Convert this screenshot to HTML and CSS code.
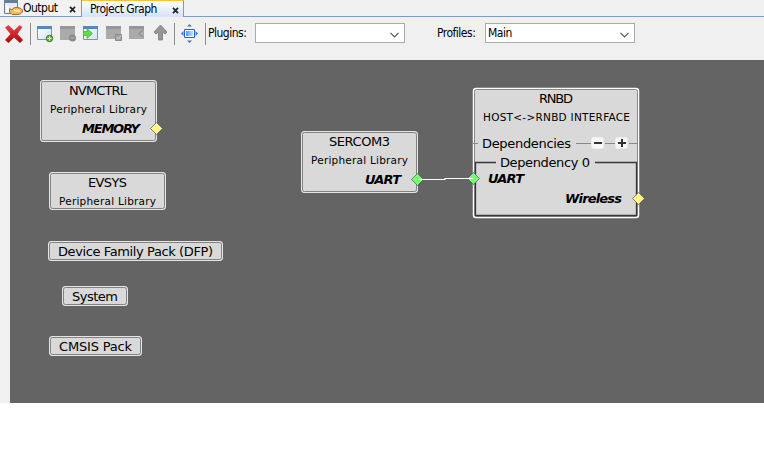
FILE: index.html
```html
<!DOCTYPE html>
<html lang="en">
<head>
<meta charset="utf-8">
<title>Project Graph</title>
<link rel="stylesheet" href="styles.css">
</head>
<body>
<main class="app">
  <nav class="tabs">
    <div class="tab tab-output">
      <svg class="tab-icon" width="20" height="16" viewBox="0 0 20 16"><path d="M.5 -1H13.500V13.500H.5Z" fill="#e4ebf2" stroke="#6d8297"/><path d="M0 0H14V3H0Z" fill="#657f9b"/><path d="M2 4L6 9L8 12H3Z" fill="#fff"/><path d="M5.500 8.500L8 10Q9 7 13 7.500Q18.500 8 18.500 11Q18 14.500 13 14.500H8L5.500 12Z" fill="#f3bd68" stroke="#a66a29"/><path d="M10 10.500L16 11" stroke="#fff0bd" stroke-width="1.500"/></svg>
      <span class="label">Output</span>
      <svg class="close" width="7" height="7" viewBox="0 0 7 7"><path d="M1 .8L6 6.2M6 .8L1 6.2"/></svg>
    </div>
    <div class="tab tab-active">
      <span class="label">Project Graph</span>
      <svg class="close" width="7" height="7" viewBox="0 0 7 7"><path d="M1 .8L6 6.2M6 .8L1 6.2"/></svg>
    </div>
  </nav>
  <div class="toolbar">
    <svg class="tools" width="206" height="34" viewBox="0 0 206 34">
      <defs><linearGradient id="red" x2="0" y2="1"><stop stop-color="#e8454a"/><stop offset="1" stop-color="#b30509"/></linearGradient><linearGradient id="blue"><stop stop-color="#4c9bff"/><stop offset="1" stop-color="#c0e5ff"/></linearGradient><linearGradient id="win" x2="1" y2="1"><stop stop-color="#fff"/><stop offset="1" stop-color="#cfe1f7"/></linearGradient></defs>
      <path d="M5 10.500L8.500 8L14 13.500L19.500 8L22.500 10L17.500 17L23 23L20 26L14 20.500L8.500 26L5 23L10.500 17Z" fill="url(#red)"/>
      <path d="M30.500 6V28M174.500 6V28M205.500 6V28" stroke="#8c8c8c"/>
      <g transform="translate(0 1)">
      <path d="M37.500 8.500H51.500V21.500H37.500Z" fill="url(#win)" stroke="#7298be"/><path d="M37 8H52V11H37Z" fill="#5687b8"/><circle cx="49.500" cy="20.500" r="3.200" fill="#72b34d" stroke="#3c7523"/><path d="M47.500 20.500H51.500M49.500 18.500V22.500" stroke="#fff"/>
      <path d="M60 8H75V22H60Z" fill="#aaa"/><path d="M60 8H75V11H60Z" fill="#979797"/><circle cx="72.500" cy="20" r="3.500" fill="#898989"/><path d="M70.500 20H74.500" stroke="#bbb"/>
      <path d="M83.500 8.500H97.500V21.500H83.500Z" fill="url(#win)" stroke="#7298be"/><path d="M83 8H98V11H83Z" fill="#5687b8"/><path d="M83.500 13.500H87V10.500L92.500 15.500L87 20.500V17.500H83.500Z" fill="#5fdd43" stroke="#42b52b" stroke-width=".7"/>
      <path d="M106 8H121V21H106Z" fill="#aaa"/><path d="M106 8H121V11H106Z" fill="#979797"/><path d="M115.500 16.500H121.500V22.500H115.500Z" fill="#a3a3a3" stroke="#8c8c8c"/><path d="M117 19L118.500 21L121 17.500" fill="none" stroke="#ccc"/>
      <path d="M129 8H144V21H129Z" fill="#aaa"/><path d="M129 8H144V11H129Z" fill="#979797"/><path d="M143.500 12L138.500 15.500L143.500 19" fill="none" stroke="#8a8a8a"/>
      <path d="M160.500 7L167 14L165 16L162.500 14V22H158.500V14L156 16L154 14Z" fill="#969696" stroke="#898989"/>
      <path d="M184.500 11.500H194.500V19.500H184.500Z" fill="#fff" stroke="#285fdb"/><path d="M186 13H193V18H186Z" fill="url(#blue)"/><path d="M189.500 6L192 8.500H187ZM189.500 25L192 22.500H187ZM181 15.500L183.500 13V18ZM198 15.500L195.500 13V18Z" fill="#3775dc"/>
      </g>
    </svg>
    <div class="plugins"><span class="label">Plugins:</span></div>
    <div class="select"><span class="label"></span><svg width="9" height="6" viewBox="0 0 9 6"><path d="M.5 .8L4.500 4.800L8.500 .8"/></svg></div>
    <div class="profiles"><span class="label">Profiles:</span></div>
    <div class="select"><span class="label">Main</span><svg width="9" height="6" viewBox="0 0 9 6"><path d="M.5 .8L4.500 4.800L8.500 .8"/></svg></div>
  </div>
  <section class="canvas">
    <svg class="graph" width="754" height="343" viewBox="10 60 754 343">
      <defs><g id="port"><path d="M0 -6L6 0L0 6L-6 0Z"/></g></defs>
      <g class="node">
        <rect x="40.500" y="80.500" width="116" height="61" rx="2.500"/><rect x="49.500" y="172.500" width="116" height="37" rx="2.500"/><rect x="48.500" y="241.500" width="174" height="19" rx="2.500"/><rect x="62.500" y="286.500" width="65" height="19" rx="2.500"/><rect x="49.500" y="336.500" width="92" height="19" rx="2.500"/><rect x="301.500" y="131.500" width="116" height="61" rx="2.500"/>
      </g>
      <g class="inner"><rect x="41.500" y="81.500" width="114" height="59" rx="2"/><rect x="50.500" y="173.500" width="114" height="35" rx="2"/><rect x="49.500" y="242.500" width="172" height="17" rx="2"/><rect x="63.500" y="287.500" width="63" height="17" rx="2"/><rect x="50.500" y="337.500" width="90" height="17" rx="2"/><rect x="302.500" y="132.500" width="114" height="59" rx="2"/></g>
      <rect class="selected" x="473.500" y="88.500" width="165" height="129" rx="2.500"/>
      <rect class="selected-inner" x="474.500" y="89.500" width="163" height="127" rx="2"/>
      <path d="M473 143.500H478M576 143.500H591M605 143.500H615M629 143.500H638" stroke="#888"/>
      <path d="M496 162.500H475.500V215.500H636.500V162.500H595" class="dependency"/>
      <g class="buttons"><rect x="591.500" y="137.500" width="12" height="11" rx="2"/><rect x="615.500" y="137.500" width="12" height="11" rx="2"/><path d="M594 143H602M618 143H626M622 139V147"/></g>
      <g class="green"><use href="#port" x="417.500" y="179.500"/><use href="#port" x="473.500" y="178.500"/></g>
      <path d="M418 179.500H445V178.500H473" fill="none" stroke="#fff" stroke-width="1.200"/>
      <g class="yellow"><use href="#port" x="156.500" y="128.500"/><use href="#port" x="638.500" y="198.500"/></g>
      <g class="heading">
        <text x="69" y="95" textLength="58">NVMCTRL</text><text x="88" y="187" textLength="39">EVSYS</text><text x="58" y="256" textLength="155">Device Family Pack (DFP)</text><text x="72" y="301" textLength="46">System</text><text x="59" y="351" textLength="73">CMSIS Pack</text><text x="329" y="146" textLength="61">SERCOM3</text><text x="539" y="103" textLength="34">RNBD</text><text x="482" y="148" textLength="89">Dependencies</text><text x="500" y="167" textLength="90">Dependency 0</text>
      </g>
      <g class="small"><text x="50" y="113" textLength="97">Peripheral Library</text><text x="59" y="205" textLength="97">Peripheral Library</text><text x="311" y="164" textLength="97">Peripheral Library</text><text x="483" y="121" textLength="147">HOST&lt;-&gt;RNBD INTERFACE</text></g>
      <g class="signal"><text x="82" y="133" textLength="58">MEMORY</text><text x="365" y="184" textLength="36">UART</text><text x="488" y="183" textLength="36">UART</text><text x="565" y="203" textLength="57">Wireless</text></g>
    </svg>
  </section>
</main>
</body>
</html>
```
FILE: styles.css
```css
*{box-sizing:border-box}
body{margin:0;background:#fff;font-family:"DejaVu Sans Condensed","DejaVu Sans",sans-serif;font-size:12px;letter-spacing:-.5px;color:#000}
.app{width:764px;height:403px;background:#f0f0f0;display:flex;flex-direction:column}
.tabs{height:17px;display:flex;border-bottom:1px solid #7a9ebd;flex:none}
.tab{display:flex;align-items:center;height:16px;padding-right:5px}
.tab-output{width:82px;padding-left:4px;border-right:1px solid #7a9ebd;background:#f2f2f2}
.tab-active{width:102px;padding-left:8px;padding-right:4px;border-top:1px solid #ffc13c;border-right:1px solid #7a9ebd;background:linear-gradient(#fff,#d5e1fb);height:17px}
.tab-icon{flex:none}
.tab .label{line-height:16px}
.tab-active .label{margin-top:-1px}
.close{margin-left:auto;margin-top:3px;fill:none;stroke:#222;stroke-width:1.700}
.tab-active .close{margin-top:2px}
.label{display:block;white-space:nowrap;flex:none}
.tab-icon+.label{margin-left:-1px}
.toolbar{height:43px;display:flex;align-items:flex-start;border-top:1px solid #f5f0df;flex:none}
.tools{flex:none;margin-top:-1px}
.plugins,.profiles{padding-top:7px;line-height:16px;flex:none}
.plugins{width:49px;padding-left:2px}
.profiles{width:80px;padding-left:32px}
.select{height:20px;width:150px;border:1px solid #a9a9ae;background:#fff;margin-top:5px;display:flex;align-items:center;justify-content:space-between;padding:0 5px 0 2px;flex:none}
.select svg{fill:none;stroke:#555;stroke-width:1.200;margin-top:4px}
.canvas{margin-left:10px;height:343px;background:#646464}
.graph{display:block;font-family:"DejaVu Sans",sans-serif;letter-spacing:0}
.node rect{fill:#d9d9d9;stroke:#e5e5e5}
.inner rect{fill:none;stroke:#828282}
.selected{fill:#d9d9d9;stroke:#fff;stroke-width:1.500}
.selected-inner{fill:none;stroke:#898989}
.dependency{fill:none;stroke:#383838;stroke-width:1.300}
.heading{font-size:13px}
.small{font-size:10.500px}
.signal{font-size:13px;font-weight:bold;font-style:italic}
.green{fill:#76ff73;stroke:#575757;stroke-width:.7}
.yellow{fill:#fff582;stroke:#575757;stroke-width:.7}
.buttons rect{fill:#f8f8f8;stroke:#eee}
.buttons path{stroke:#333;stroke-width:2}
```
